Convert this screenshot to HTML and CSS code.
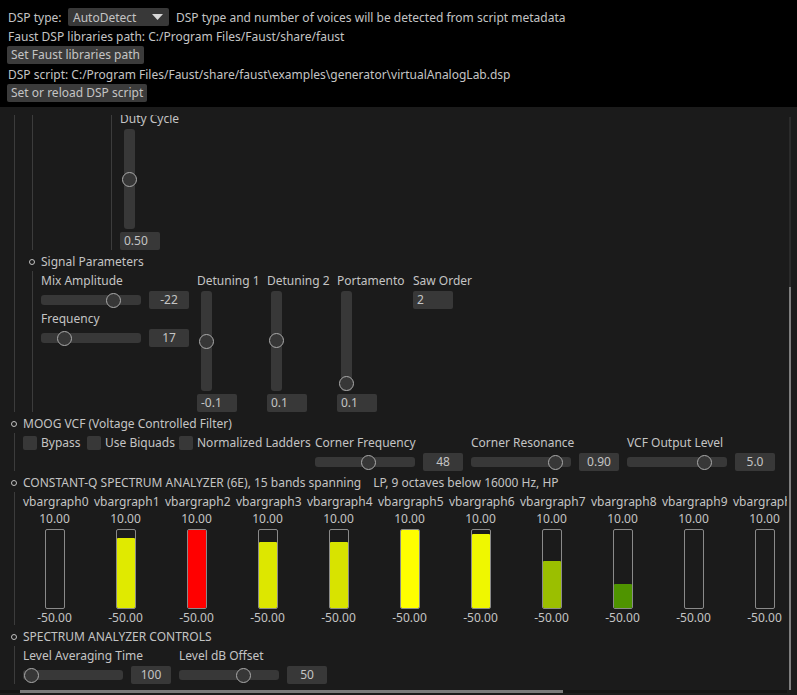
FILE: index.html
```html
<!DOCTYPE html>
<html>
<head>
<meta charset="utf-8">
<link rel="stylesheet" href="styles.css">
</head>
<body>
<div class="top">
  <div class="row">
    <span class="lbl-type">DSP type:</span>
    <div class="combo"><span class="combo-text">AutoDetect</span><svg class="arrow" width="11" height="6" viewBox="0 0 11 6"><polygon points="0,0 11,0 5.5,6" fill="#d8d8d8"/></svg></div>
    <span class="hint">DSP type and number of voices will be detected from script metadata</span>
  </div>
  <div class="row text">Faust DSP libraries path: C:/Program Files/Faust/share/faust</div>
  <div class="row"><button class="btn">Set Faust libraries path</button></div>
  <div class="row text">DSP script: C:/Program Files/Faust/share/faust\examples\generator\virtualAnalogLab.dsp</div>
  <div class="row"><button class="btn">Set or reload DSP script</button></div>
</div>

<div class="main">
  <div class="mainrow">
    <div class="viewport">
      <div class="content">

        <div class="tree top-tree">
          <div class="tree sub-b">
            <div class="hgroup">
              <div class="spacer"></div>
              <div class="tree sub-c">
                <div class="vcol">
                  <div class="label">Duty Cycle</div>
                  <div class="vslider"><div class="knob vk" style="top:42.5px"></div></div>
                  <div class="val left">0.50</div>
                </div>
              </div>
            </div>
          </div>

          <div class="header h1"><span class="bullet"></span><span>Signal Parameters</span></div>
          <div class="tree children">
            <div class="cols">
              <div class="hcol">
                <div class="label">Mix Amplitude</div>
                <div class="hs"><div class="track"><div class="knob hk" style="left:64.5px"></div></div><div class="val">-22</div></div>
                <div class="label gap2">Frequency</div>
                <div class="hs"><div class="track"><div class="knob hk" style="left:15.5px"></div></div><div class="val">17</div></div>
              </div>
              <div class="vcol w62">
                <div class="label">Detuning 1</div>
                <div class="vslider"><div class="knob vk" style="top:42.5px"></div></div>
                <div class="val left">-0.1</div>
              </div>
              <div class="vcol w62">
                <div class="label">Detuning 2</div>
                <div class="vslider"><div class="knob vk" style="top:41.5px"></div></div>
                <div class="val left">0.1</div>
              </div>
              <div class="vcol w68">
                <div class="label">Portamento</div>
                <div class="vslider"><div class="knob vk" style="top:84.5px"></div></div>
                <div class="val left">0.1</div>
              </div>
              <div class="vcol">
                <div class="label">Saw Order</div>
                <div class="val left">2</div>
              </div>
            </div>
          </div>
        </div>

        <div class="header h0"><span class="bullet"></span><span>MOOG VCF (Voltage Controlled Filter)</span></div>
        <div class="tree top-tree children">
          <div class="cols">
            <div class="check"><span class="cb"></span><span class="cbl w38">Bypass</span></div>
            <div class="check"><span class="cb"></span><span class="cbl w66">Use Biquads</span></div>
            <div class="check"><span class="cb"></span><span class="cbl w110">Normalized Ladders</span></div>
            <div class="hcol">
              <div class="label">Corner Frequency</div>
              <div class="hs"><div class="track"><div class="knob hk" style="left:45.5px"></div></div><div class="val">48</div></div>
            </div>
            <div class="hcol">
              <div class="label">Corner Resonance</div>
              <div class="hs"><div class="track"><div class="knob hk" style="left:76.5px"></div></div><div class="val">0.90</div></div>
            </div>
            <div class="hcol">
              <div class="label">VCF Output Level</div>
              <div class="hs"><div class="track"><div class="knob hk" style="left:69.5px"></div></div><div class="val">5.0</div></div>
            </div>
          </div>
        </div>

        <div class="header h0"><span class="bullet"></span><span class="t1">CONSTANT-Q SPECTRUM ANALYZER (6E), 15 bands spanning</span><span class="t2">LP, 9 octaves below 16000 Hz, HP</span></div>
        <div class="tree top-tree children">
          <div class="bars">
            <div class="bg"><div class="label name">vbargraph0</div><div class="label gap2">10.00</div><div class="bar"></div><div class="label gap1">-50.00</div></div>
            <div class="bg"><div class="label name">vbargraph1</div><div class="label gap2">10.00</div><div class="bar"><div class="fill c1" style="height:70px"></div></div><div class="label gap1">-50.00</div></div>
            <div class="bg"><div class="label name">vbargraph2</div><div class="label gap2">10.00</div><div class="bar"><div class="fill c2" style="height:78px"></div></div><div class="label gap1">-50.00</div></div>
            <div class="bg"><div class="label name">vbargraph3</div><div class="label gap2">10.00</div><div class="bar"><div class="fill c3" style="height:66px"></div></div><div class="label gap1">-50.00</div></div>
            <div class="bg"><div class="label name">vbargraph4</div><div class="label gap2">10.00</div><div class="bar"><div class="fill c4" style="height:66px"></div></div><div class="label gap1">-50.00</div></div>
            <div class="bg"><div class="label name">vbargraph5</div><div class="label gap2">10.00</div><div class="bar"><div class="fill c5" style="height:78px"></div></div><div class="label gap1">-50.00</div></div>
            <div class="bg"><div class="label name">vbargraph6</div><div class="label gap2">10.00</div><div class="bar"><div class="fill c6" style="height:74px"></div></div><div class="label gap1">-50.00</div></div>
            <div class="bg"><div class="label name">vbargraph7</div><div class="label gap2">10.00</div><div class="bar"><div class="fill c7" style="height:47px"></div></div><div class="label gap1">-50.00</div></div>
            <div class="bg"><div class="label name">vbargraph8</div><div class="label gap2">10.00</div><div class="bar"><div class="fill c8" style="height:24px"></div></div><div class="label gap1">-50.00</div></div>
            <div class="bg"><div class="label name">vbargraph9</div><div class="label gap2">10.00</div><div class="bar"></div><div class="label gap1">-50.00</div></div>
            <div class="bg"><div class="label name">vbargraph10</div><div class="label gap2">10.00</div><div class="bar"></div><div class="label gap1">-50.00</div></div>
          </div>
        </div>

        <div class="header h0"><span class="bullet"></span><span>SPECTRUM ANALYZER CONTROLS</span></div>
        <div class="tree top-tree children">
          <div class="cols">
            <div class="hcol">
              <div class="label">Level Averaging Time</div>
              <div class="hs"><div class="track"><div class="knob hk" style="left:0.5px"></div></div><div class="val">100</div></div>
            </div>
            <div class="hcol">
              <div class="label">Level dB Offset</div>
              <div class="hs"><div class="track"><div class="knob hk" style="left:56.5px"></div></div><div class="val">50</div></div>
            </div>
          </div>
        </div>

      </div>
    </div>
    <div class="vscroll"><div class="vtrack"><div class="vthumb"></div></div></div>
  </div>
  <div class="hscroll"><div class="hthumb"></div></div>
</div>
</body>
</html>
```
FILE: styles.css
```css
* { box-sizing: border-box; }
html, body { margin: 0; padding: 0; }
body {
  width: 797px;
  height: 695px;
  overflow: hidden;
  background: #000;
  color: #c4c4c4;
  font-family: "Noto Sans", "Open Sans", sans-serif;
  font-size: 12px;
}
.top {
  height: 107px;
  padding: 8px 7px 0 7px;
  display: flex;
  flex-direction: column;
  gap: 1px;
}
.row {
  height: 18px;
  display: flex;
  align-items: center;
  white-space: nowrap;
}
.row.text { padding-left: 1px; }
.lbl-type { width: 61px; padding-left: 1px; }
.combo {
  width: 101px;
  height: 18px;
  background: #383838;
  border-radius: 2px;
  display: flex;
  align-items: center;
  padding-left: 5px;
  padding-right: 6px;
}
.combo-text { flex: 1; }
.hint { margin-left: 7px; }
.btn {
  height: 18px;
  padding: 0 4px;
  border: none;
  border-radius: 2px;
  background: #3b3b3b;
  color: #c4c4c4;
  font: inherit;
  line-height: 18px;
}

.main {
  height: 588px;
  background: #1b1b1b;
  padding-top: 8px;
}
.mainrow { display: flex; height: 575px; }
.viewport { width: 787px; height: 575px; overflow: hidden; }
.content { margin-top: -4px; }
.vscroll { width: 10px; padding-left: 2px; padding-top: 2px; }
.vtrack {
  width: 2px;
  height: 573px;
  background: #2b2b2b;
  display: flex;
  flex-direction: column;
  padding-top: 170px;
}
.vthumb { flex: 1; background: #7e7e7e; }
.hscroll { height: 3px; width: 787px; background: #141414; padding-left: 20px; }
.hthumb { width: 543px; height: 3px; background: #7a7a7a; }

.tree {
  border-left: 1px solid #3c3c3c;
  margin-left: 9px;
  padding-left: 8px;
}
.tree.top-tree { margin-left: 14px; }
.tree.children { margin-top: 2px; padding-top: 2px; }
.hgroup { display: flex; }
.spacer { width: 61px; }

.label { height: 15px; line-height: 15px; white-space: nowrap; }
.gap2 { margin-top: 2px; }
.gap1 { margin-top: 1px; }

.header {
  height: 15px;
  margin-top: 4px;
  display: flex;
  align-items: center;
  white-space: nowrap;
}
.bullet {
  width: 6px;
  height: 6px;
  border: 1px solid #c0c0c0;
  border-radius: 50%;
  margin-right: 6px;
}
.h0 .bullet { margin-left: 11px; }
.h1 .bullet { margin-left: 6px; }
.t2 { margin-left: 12px; }

.cols { display: flex; gap: 8px; align-items: flex-start; }
.hcol { width: 148px; display: flex; flex-direction: column; }
.vcol { display: flex; flex-direction: column; }
.w62 { width: 62px; }
.w68 { width: 68px; }

.hs { display: flex; align-items: center; height: 18px; margin-top: 3px; }
.track {
  width: 100px;
  height: 10px;
  background: #383838;
  border-radius: 3px;
  position: relative;
}
.vslider {
  width: 11px;
  height: 100px;
  margin: 3px 0 0 4px;
  background: #383838;
  border-radius: 3px;
  position: relative;
}
.knob {
  position: absolute;
  width: 15px;
  height: 15px;
  border: 1.5px solid #ababab;
  border-radius: 50%;
  background: #373737;
}
.hk { top: -2.5px; }
.vk { left: -2px; }
.val {
  width: 40px;
  height: 18px;
  line-height: 18px;
  background: #383838;
  border-radius: 2px;
  text-align: center;
  white-space: nowrap;
}
.hs .val { margin-left: 8px; }
.val.left { text-align: left; padding-left: 4px; margin-top: 3px; }

.check { display: flex; align-items: center; height: 15px; }
.cb {
  width: 14px;
  height: 14px;
  background: #383838;
  border-radius: 2px;
  margin-right: 4px;
}
.cbl { white-space: nowrap; }
.w38 { width: 38px; }
.w66 { width: 66px; }
.w110 { width: 110px; }

.bars { display: flex; gap: 8px; }
.bg { width: 63px; flex: none; display: flex; flex-direction: column; align-items: center; }
.bg .name { align-self: flex-start; }
.bar {
  width: 20px;
  height: 80px;
  margin-top: 3px;
  border: 1px solid #8a8a8a;
  border-radius: 2px;
  display: flex;
  align-items: flex-end;
}
.fill { width: 100%; border-radius: 1px; }
.c1 { background: #e0ea00; }
.c2 { background: #ff0000; }
.c3 { background: #dde700; }
.c4 { background: #d8e300; }
.c5 { background: #ffff00; }
.c6 { background: #eff700; }
.c7 { background: #9bbf00; }
.c8 { background: #4f9400; }
```
